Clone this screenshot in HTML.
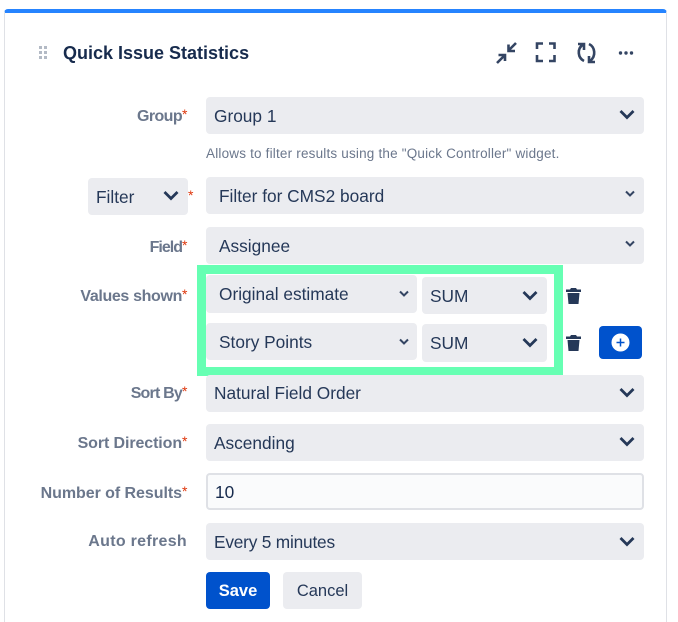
<!DOCTYPE html>
<html><head><meta charset="utf-8"><style>
html,body{margin:0;padding:0;background:#fff;width:678px;height:622px;overflow:hidden}
#w{position:relative;width:678px;height:622px;overflow:hidden;font-family:"Liberation Sans",sans-serif;color:#172b4d}
.a{position:absolute;white-space:nowrap}
.card{left:4px;top:9px;width:663px;height:613px;box-sizing:border-box;border:1px solid #dfe1e6;border-bottom:0;border-top:4px solid #2684ff;border-radius:4px 4px 0 0}
.box{position:absolute;background:#ebecf0;border-radius:4px;box-sizing:border-box;font-size:17.3px;line-height:39px;padding-left:8px;white-space:nowrap;color:#253858}
.lab{position:absolute;right:490px;font-size:16px;line-height:22px;color:#6b778c;font-weight:bold;white-space:nowrap}
.lab i,.st{display:inline-block;width:6px;color:#de350b;font-style:normal;font-weight:normal;font-size:14px;vertical-align:2px;overflow:visible;letter-spacing:0}
.c{position:absolute}
</style></head><body><div id="w">
<div class="a card"></div>
<svg class="c" style="left:39px;top:46px" width="9" height="14"><g fill="#b3bac5"><rect width="3" height="3" x="0" y="0"/><rect width="3" height="3" x="5" y="0"/><rect width="3" height="3" x="0" y="5"/><rect width="3" height="3" x="5" y="5"/><rect width="3" height="3" x="0" y="10"/><rect width="3" height="3" x="5" y="10"/></g></svg>
<div class="a" style="left:63px;top:41px;font-size:18px;line-height:24px;font-weight:bold">Quick Issue Statistics</div>

<svg class="c" style="left:495px;top:41px" width="24" height="24" fill="none" stroke="#344563" stroke-width="2.600"><path d="M21 2L14 9M13.500 3.500V10H20M2 22L9 15M3.500 14H10V20"/></svg>
<svg class="c" style="left:535px;top:41px" width="22" height="22" fill="none" stroke="#344563" stroke-width="2.600"><path d="M2 8V2.500H8M14 2.500H19.500V8M19.500 14V20H14M8 20H2V14"/></svg>
<svg class="c" style="left:575px;top:41px" width="24" height="24" fill="none" stroke="#344563" stroke-width="2.600"><path d="M9 20C3 17 1.500 8 8 3.500M3 3H9V9M14 3C20 6 21.500 15 15 20M20 21H14V15"/></svg>
<svg class="c" style="left:618px;top:50px" width="16" height="6" fill="#344563"><circle cx="2.500" cy="3" r="1.700"/><circle cx="8" cy="3" r="1.700"/><circle cx="13.500" cy="3" r="1.700"/></svg>

<div class="lab" style="top:103px;letter-spacing:-.6px">Group<i>*</i></div>
<div class="box" style="left:206px;top:97px;width:438px;height:37px">Group 1</div>
<div class="a" style="left:206px;top:145px;font-size:13.500px;line-height:17px;letter-spacing:.19px;color:#6b778c">Allows to filter results using the "Quick Controller" widget.</div>

<div class="box" style="left:88px;top:178px;width:100px;height:37px">Filter</div>
<div class="a st" style="left:188px;top:185px;line-height:20px">*</div>
<div class="box" style="left:206px;top:177px;width:438px;height:37px;padding-left:13px">Filter for CMS2 board</div>

<div class="lab" style="top:234px;letter-spacing:-1px">Field<i>*</i></div>
<div class="box" style="left:206px;top:227px;width:438px;height:37px;padding-left:13px">Assignee</div>

<div class="lab" style="top:283px;letter-spacing:-.35px">Values shown<i>*</i></div>
<div class="c" style="left:197px;top:265px;width:366px;height:111px;box-sizing:border-box;border:9px solid #66ffb3;background:#fff"></div>
<div class="box" style="left:206px;top:275px;width:211px;height:38px;padding-left:13px">Original estimate</div>
<div class="box" style="left:422px;top:277px;width:125px;height:37px">SUM</div>
<div class="box" style="left:206px;top:323px;width:211px;height:37px;padding-left:13px">Story Points</div>
<div class="box" style="left:422px;top:324px;width:125px;height:38px">SUM</div>

<svg class="c" style="left:565px;top:287px" width="17" height="18" fill="#253858"><path d="M6 1H11L12 2.500H16V5H1V2.500H5ZM2.500 6H14.500L13.500 17H3.500Z"/></svg>
<svg class="c" style="left:565px;top:334px" width="17" height="18" fill="#253858"><path d="M6 1H11L12 2.500H16V5H1V2.500H5ZM2.500 6H14.500L13.500 17H3.500Z"/></svg>
<div class="c" style="left:599px;top:326px;width:43px;height:33px;background:#0052cc;border-radius:4px"></div>
<svg class="c" style="left:611px;top:333px" width="19" height="19"><circle cx="9.500" cy="9.500" r="9" fill="#fff"/><path d="M5.500 9.500H13.500M9.500 5.500V13.500" stroke="#0052cc" stroke-width="1.500"/></svg>

<div class="lab" style="top:380px;letter-spacing:-.8px">Sort By<i>*</i></div>
<div class="box" style="left:206px;top:375px;width:438px;height:37px;line-height:37px">Natural Field Order</div>
<div class="lab" style="top:430px;letter-spacing:-.1px">Sort Direction<i>*</i></div>
<div class="box" style="left:206px;top:424px;width:438px;height:37px">Ascending</div>
<div class="lab" style="top:480px;letter-spacing:-.05px">Number of Results<i>*</i></div>
<div class="box" style="left:206px;top:473px;width:438px;height:37px;background:#fafbfc;border:2px solid #dfe1e6;line-height:35px;padding-left:7px;color:#172b4d">10</div>
<div class="lab" style="top:531px;right:491px;letter-spacing:.3px">Auto refresh</div>
<div class="box" style="left:206px;top:523px;width:438px;height:37px;letter-spacing:-.2px">Every 5 minutes</div>
<div class="box" style="left:206px;top:572px;width:64px;height:37px;background:#0052cc;color:#fff;font-weight:bold;padding:0;text-align:center;font-size:16.500px">Save</div>
<div class="box" style="left:283px;top:572px;width:79px;height:37px;padding:0;text-align:center;font-size:16.500px">Cancel</div>

<svg class="c" style="left:618px;top:109px" width="18" height="13" fill="none" stroke="#253858" stroke-width="2.800"><path d="M2.500 2L9 8.500L15.500 2"/></svg>
<svg class="c" style="left:162px;top:190px" width="18" height="13" fill="none" stroke="#253858" stroke-width="2.800"><path d="M2.500 2L9 8.500L15.500 2"/></svg>
<svg class="c" style="left:624px;top:190px" width="12" height="9" fill="none" stroke="#344563" stroke-width="2"><path d="M2 1.500L6 5.500L10 1.500"/></svg>
<svg class="c" style="left:624px;top:240px" width="12" height="9" fill="none" stroke="#344563" stroke-width="2"><path d="M2 1.500L6 5.500L10 1.500"/></svg>
<svg class="c" style="left:398px;top:290px" width="12" height="9" fill="none" stroke="#344563" stroke-width="2"><path d="M2 1.500L6 5.500L10 1.500"/></svg>
<svg class="c" style="left:398px;top:338px" width="12" height="9" fill="none" stroke="#344563" stroke-width="2"><path d="M2 1.500L6 5.500L10 1.500"/></svg>
<svg class="c" style="left:521px;top:290px" width="18" height="13" fill="none" stroke="#253858" stroke-width="2.800"><path d="M2.500 2L9 8.500L15.500 2"/></svg>
<svg class="c" style="left:521px;top:337px" width="18" height="13" fill="none" stroke="#253858" stroke-width="2.800"><path d="M2.500 2L9 8.500L15.500 2"/></svg>
<svg class="c" style="left:618px;top:387px" width="18" height="13" fill="none" stroke="#253858" stroke-width="2.800"><path d="M2.500 2L9 8.500L15.500 2"/></svg>
<svg class="c" style="left:618px;top:436px" width="18" height="13" fill="none" stroke="#253858" stroke-width="2.800"><path d="M2.500 2L9 8.500L15.500 2"/></svg>
<svg class="c" style="left:618px;top:536px" width="18" height="13" fill="none" stroke="#253858" stroke-width="2.800"><path d="M2.500 2L9 8.500L15.500 2"/></svg>
</div></body></html>
